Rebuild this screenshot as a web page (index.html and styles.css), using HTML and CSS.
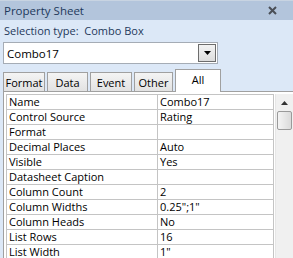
FILE: index.html
```html
<!DOCTYPE html>
<html lang="en">
<head>
  <meta charset="UTF-8">
  <title>Property Sheet</title>
  <link rel="stylesheet" href="styles.css">
</head>
<body>
  <div class="sheet">
    <div class="title-bar">
      <span class="title">Property Sheet</span>
      <svg class="close" width="9" height="9" viewBox="0 0 9 9">
        <path d="M1 1 L8 8 M8 1 L1 8" stroke="#4a4f57" stroke-width="2"/>
      </svg>
    </div>

    <div class="selection">Selection type:&nbsp;&nbsp;Combo Box</div>

    <!-- object picker -->
    <div class="combo">
      <span class="combo-text">Combo17</span>
      <span class="combo-btn">
        <svg width="7" height="4" viewBox="0 0 7 4"><path d="M0 0 H7 L3.5 4 Z" fill="#000"/></svg>
      </span>
    </div>

    <div class="tabs">
      <div class="tab">Format</div>
      <div class="tab">Data</div>
      <div class="tab">Event</div>
      <div class="tab">Other</div>
      <div class="tab active">All</div>
    </div>

    <div class="grid-wrap">
      <table class="grid">
        <tr><td>Name</td><td>Combo17</td></tr>
        <tr><td>Control Source</td><td>Rating</td></tr>
        <tr><td>Format</td><td></td></tr>
        <tr><td>Decimal Places</td><td>Auto</td></tr>
        <tr><td>Visible</td><td>Yes</td></tr>
        <tr><td>Datasheet Caption</td><td></td></tr>
        <tr><td>Column Count</td><td>2</td></tr>
        <tr><td>Column Widths</td><td>0.25";1"</td></tr>
        <tr><td>Column Heads</td><td>No</td></tr>
        <tr><td>List Rows</td><td>16</td></tr>
        <tr><td>List Width</td><td>1"</td></tr>
      </table>
      <div class="scrollbar">
        <div class="arrow">
          <svg width="7" height="4" viewBox="0 0 7 4"><path d="M0 4 H7 L3.5 0 Z" fill="#333"/></svg>
        </div>
        <div class="thumb"></div>
      </div>
    </div>
  </div>
</body>
</html>
```

FILE: styles.css
```css
body {
  margin: 0;
  font-family: "Open Sans", "Noto Sans", sans-serif;
  font-size: 11px;
  color: #000;
}

.sheet {
  width: 293px;
  height: 258px;
  background-color: #dce8f7;
  overflow: hidden;
}

.title-bar {
  height: 19px;
  background-color: #b3c5dc;
  border-top: 1px solid #c8d4e2;
  display: flex;
  align-items: center;
  justify-content: space-between;
  padding: 0 16px 0 4px;
}

.title {
  font-size: 11.5px;
  color: #1e395b;
}

.selection {
  padding: 3px 4px 0;
  height: 16px;
  color: #1e395b;
}

.combo {
  margin: 3px 0 0 3px;
  width: 213px;
  height: 20px;
  background-color: #fff;
  border: 1px solid #a5acb5;
  display: flex;
  align-items: center;
  justify-content: space-between;
}

.combo-text {
  padding-left: 3px;
  font-size: 11.5px;
}

.combo-btn {
  width: 16px;
  height: 16px;
  margin-right: 1px;
  border: 1px solid #6d6d6d;
  background: linear-gradient(#f3f3f3, #dcdcdc);
  display: flex;
  align-items: center;
  justify-content: center;
}

.tabs {
  display: flex;
  align-items: flex-end;
  margin: 3px 0 0 3px;
  height: 24px;
  gap: 2px;
}

.tab {
  height: 19px;
  padding: 0 2px;
  box-sizing: border-box;
  border: 1px solid #a0a0a0;
  border-bottom: none;
  background: linear-gradient(#f4f4f4, #e2e2e2);
  font-size: 11px;
  display: flex;
  align-items: center;
  justify-content: center;
}

.tab:nth-child(1) { width: 42px; }
.tab:nth-child(2) { width: 41px; }
.tab:nth-child(3) { width: 42px; }
.tab:nth-child(4) { width: 39px; }

.tab.active {
  width: 46px;
  height: 23px;
  background: #fff;
  margin-bottom: -1px;
  padding-bottom: 4px;
  position: relative;
}

.grid-wrap {
  margin-left: 3px;
  height: 166px;
  display: flex;
  background-color: #fff;
  border-left: 1px solid #a0a0a0;
  border-top: 1px solid #a0a0a0;
  padding: 2px 0 0 2px;
}

.grid {
  border-collapse: collapse;
  width: 271px;
  border: 1px solid #c4c4c4;
}

.grid td {
  height: 14px;
  padding: 0 0 0 2px;
  border: 1px solid #c4c4c4;
  font-size: 11px;
  line-height: 14px;
  white-space: nowrap;
}

.grid td:first-child {
  width: 148px;
}

.scrollbar {
  width: 17px;
  margin-left: 1px;
  background-color: #f0f0f0;
  border-left: 1px solid #e6e6e6;
}

.arrow {
  height: 17px;
  display: flex;
  align-items: center;
  justify-content: center;
}

.thumb {
  height: 17px;
  margin: 0 1px;
  border: 1px solid #9a9a9a;
  border-radius: 2px;
  background: linear-gradient(90deg, #f4f4f4, #dadada);
}
```
